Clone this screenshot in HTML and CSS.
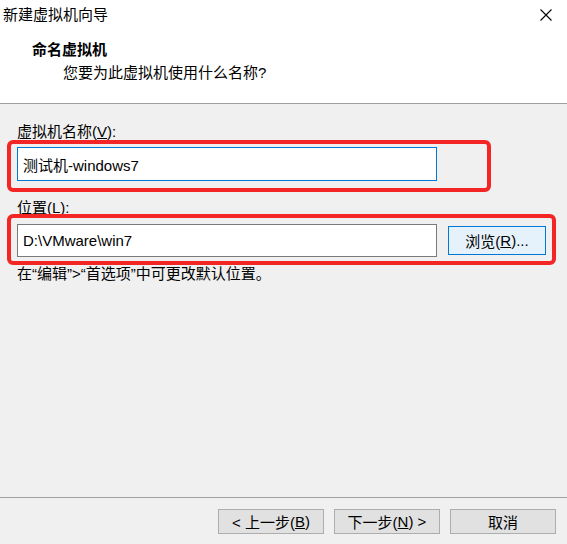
FILE: index.html
```html
<!DOCTYPE html>
<html lang="zh-CN">
<head>
<meta charset="utf-8">
<title>新建虚拟机向导</title>
<link rel="stylesheet" href="styles.css">
</head>
<body>
<div class="window">
  <div class="top">
    <div class="titlebar">
      <span class="title">新建虚拟机向导</span>
      <span class="close">
        <svg width="12" height="12" viewBox="0 0 12 12"><path d="M0.5 0.5 L11.5 11.5 M11.5 0.5 L0.5 11.5" stroke="#000" stroke-width="1.1" fill="none"/></svg>
      </span>
    </div>
    <div class="head">
      <div class="heading">命名虚拟机</div>
      <div class="sub">您要为此虚拟机使用什么名称?</div>
    </div>
  </div>
  <div class="content">
    <div class="label">虚拟机名称(<u>V</u>):</div>
    <div class="row row-name">
      <div class="input focused">测试机-windows7</div>
      <span class="mark mark-name"></span>
    </div>
    <div class="label label-loc">位置(<u>L</u>):</div>
    <div class="row row-loc">
      <div class="input">D:\VMware\win7</div>
      <div class="btn browse">浏览(<u>R</u>)...</div>
      <span class="mark mark-loc"></span>
    </div>
    <div class="hint">在<span class="q">“</span>编辑<span class="q">”&gt;“</span>首选项<span class="q">”</span>中可更改默认位置。</div>
  </div>
  <div class="footer">
    <div class="btn nav">&lt; 上一步(<u>B</u>)</div>
    <div class="btn nav">下一步(<u>N</u>) &gt;</div>
    <div class="btn nav">取消</div>
  </div>
</div>
</body>
</html>
```

FILE: styles.css
```css
html, body {
  margin: 0;
  padding: 0;
}
body {
  background: #f0f0f0;
  font-family: "Liberation Sans", "Noto Sans CJK SC", sans-serif;
  font-size: 15px;
  color: #000;
}
.window {
  width: 567px;
  height: 544px;
  display: flex;
  flex-direction: column;
  overflow: hidden;
}
.top {
  background: #fff;
  height: 103px;
  border-bottom: 1px solid #a0a0a0;
}
.titlebar {
  height: 30px;
  display: flex;
  align-items: center;
  justify-content: space-between;
}
.title {
  padding-left: 3px;
  line-height: 20px;
}
.close {
  display: flex;
  margin-right: 15px;
}
.head {
  padding-left: 32px;
}
.heading {
  margin-top: 10px;
  line-height: 20px;
  font-weight: bold;
}
.sub {
  margin-top: 3px;
  margin-left: 31px;
  line-height: 20px;
}
.content {
  padding: 18px 11px 0 17px;
}
.label {
  line-height: 20px;
}
.label-loc {
  margin-top: 17px;
}
.row {
  position: relative;
  display: flex;
  align-items: center;
}
.row-name {
  margin-top: 5px;
}
.row-loc {
  margin-top: 6px;
}
.input {
  box-sizing: border-box;
  width: 420px;
  height: 33px;
  background: #fff;
  border: 1px solid #7a7a7a;
  padding-left: 5px;
  display: flex;
  align-items: center;
}
.input.focused {
  height: 34px;
  border-color: #0078d7;
}
.btn {
  box-sizing: border-box;
  display: flex;
  align-items: center;
  justify-content: center;
  background: #e1e1e1;
  border: 1px solid #adadad;
}
.browse {
  margin-left: 11px;
  width: 98px;
  height: 29px;
  background: #e5f1fb;
  border-color: #0078d7;
}
.mark {
  position: absolute;
  box-sizing: border-box;
  border: 4px solid #f42525;
  border-radius: 6px;
  pointer-events: none;
}
.mark-name {
  left: -10px;
  top: -7px;
  width: 484px;
  height: 52px;
}
.mark-loc {
  left: -10px;
  top: -10px;
  width: 549px;
  height: 51px;
}
.hint {
  margin-top: 7px;
  line-height: 20px;
}
.q {
  font-family: "Liberation Sans", sans-serif;
}
.footer {
  margin-top: auto;
  height: 47px;
  border-top: 1px solid #a0a0a0;
  display: flex;
  justify-content: flex-end;
  align-items: flex-start;
  gap: 10px;
  padding: 11px 11px 0 0;
  box-sizing: border-box;
}
.nav {
  width: 106px;
  height: 25px;
}
```
